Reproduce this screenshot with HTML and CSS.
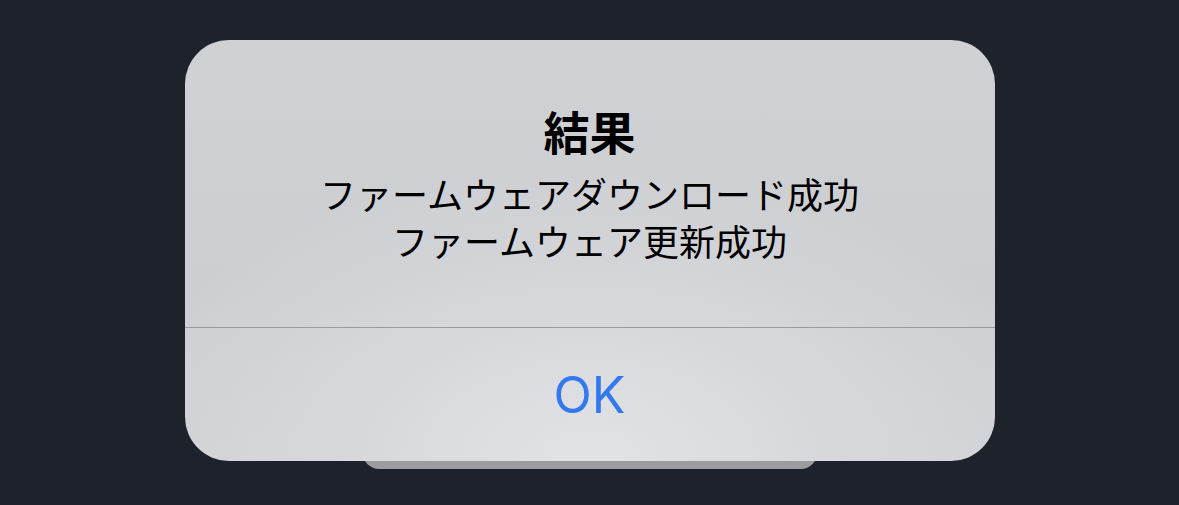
FILE: index.html
```html
<!DOCTYPE html>
<html lang="ja">
<head>
    <meta charset="UTF-8">
    <title>結果</title>
    <link rel="stylesheet" href="styles.css">
</head>
<body>
    <div class="stack">
        <div class="alert">
            <div class="alert-body">
                <h1 class="alert-title">結果</h1>
                <p class="alert-message">ファームウェアダウンロード成功<br>ファームウェア更新成功</p>
            </div>
            <button class="alert-button">OK</button>
        </div>
        <div class="sheet"></div>
    </div>
</body>
</html>
```

FILE: styles.css
```css
html, body {
    margin: 0;
    padding: 0;
    height: 100%;
}
body {
    background-color: #1e222b;
    font-family: "Noto Sans CJK JP", "Noto Sans", sans-serif;
    overflow: hidden;
}
.stack {
    display: flex;
    flex-direction: column;
    align-items: center;
    padding-top: 40px;
}
.alert {
    position: relative;
    z-index: 1;
    width: 810px;
    height: 421px;
    border-radius: 44px;
    background: radial-gradient(ellipse 60% 70% at 50% 100%, #e2e3e6 0%, #d6d7da 55%, rgba(214, 215, 218, 0) 100%),
                linear-gradient(180deg, #d0d1d4 0%, #cdced1 60%, #d1d2d5 100%);
    display: flex;
    flex-direction: column;
    overflow: hidden;
}
.alert-body {
    height: 288px;
    box-sizing: border-box;
    padding-top: 62px;
    text-align: center;
    border-bottom: 1px solid #9b9b9f;
}
.alert-title {
    margin: 0;
    font-size: 46px;
    line-height: 56px;
    font-weight: 700;
    color: #000;
}
.alert-message {
    margin: 12px 0 0;
    font-size: 36px;
    line-height: 47px;
    color: #000;
}
.alert-button {
    flex: 1;
    border: none;
    background: transparent;
    font-family: Inter, "Liberation Sans", sans-serif;
    font-size: 50px;
    color: #3478f0;
    padding: 0;
    cursor: pointer;
}
.sheet {
    width: 454px;
    height: 48px;
    margin-top: -40px;
    border-radius: 0 0 16px 16px;
    background-color: #9c9ca0;
}
```
